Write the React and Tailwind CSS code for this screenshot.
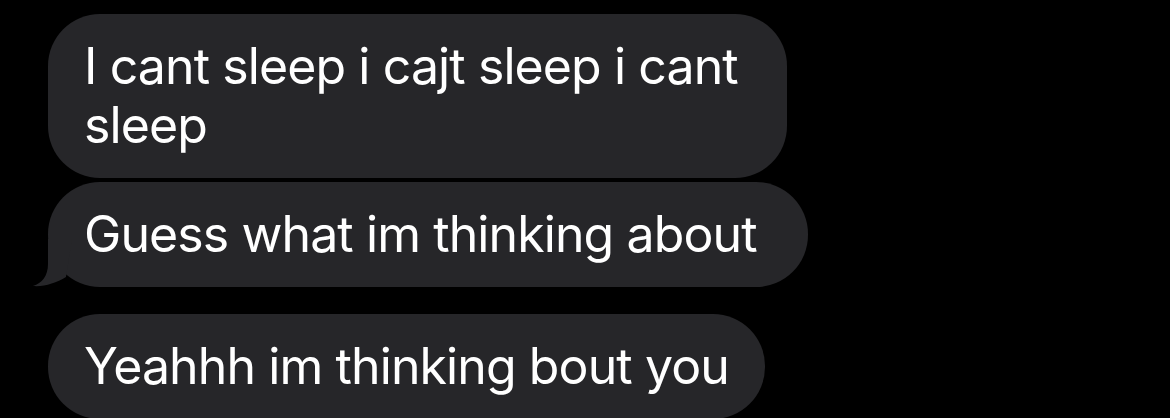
import React from 'react';

const messages = [
  { text: 'I cant sleep i cajt sleep i cant sleep', width: 'w-[739px]', gap: 'mt-0', tail: false },
  { text: 'Guess what im thinking about', width: 'w-[760px]', gap: 'mt-[4px]', tail: true },
  { text: 'Yeahhh im thinking bout you', width: 'w-[717px]', gap: 'mt-[27px]', tail: false },
];

const Tail = () => (
  <svg
    className="absolute left-[-16px] bottom-0 w-[50px] h-[48px]"
    viewBox="0 0 50 48"
    fill="#262629"
  >
    <path d="M16 0 L16 25 C16 37 10 44 1 47 C12 48 24 44 34 38 L40 0 Z" />
  </svg>
);

export default function App() {
  return (
    <div className="w-[1170px] h-[418px] overflow-hidden bg-black pl-[48px] pt-[14px] font-['Inter','Liberation_Sans',sans-serif]">
      {messages.map((m, i) => (
        <div
          key={i}
          className={`relative ${m.width} ${m.gap} rounded-[52px] bg-[#262629] pl-[36px] pr-[8px] py-[23px] text-[50px] leading-[59px] tracking-[-0.9px] text-white`}
        >
          {m.tail && <Tail />}
          <span className="relative">{m.text}</span>
        </div>
      ))}
    </div>
  );
}
